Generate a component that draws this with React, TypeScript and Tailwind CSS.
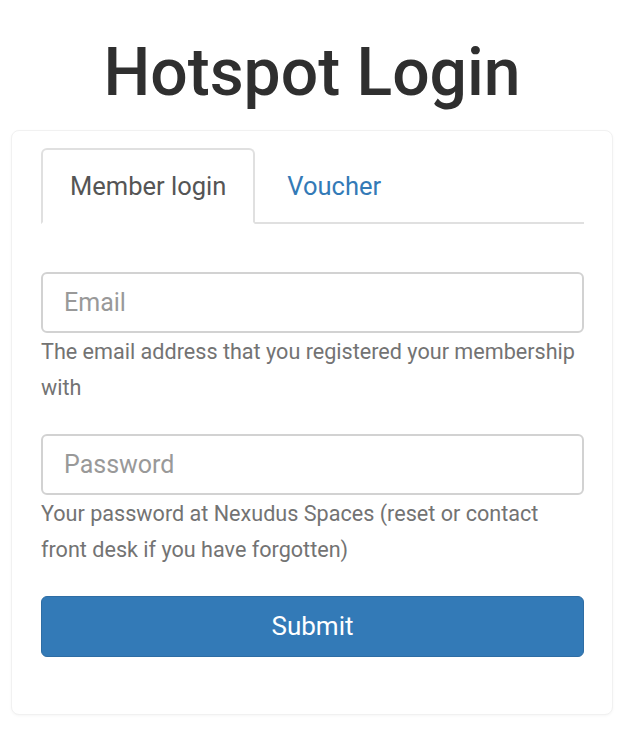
import React, { useState } from "react";

export default function App() {
  const [tab, setTab] = useState<"member" | "voucher">("member");

  return (
    <div
      className="min-h-screen w-full bg-white text-[#333]"
      style={{ fontFamily: "Roboto, 'Liberation Sans', sans-serif" }}
    >
      {/* Title */}
      <div className="pt-[37px] pb-[21px] px-[11px]">
        <h1 className="text-center text-[66px] leading-[72px] font-medium text-[#2f2f2f] pr-[16px]">
          Hotspot Login
        </h1>
      </div>

      {/* Card */}
      <div className="ml-[11px] w-[602px] rounded-lg border border-[#f1f1f1] bg-white pl-[29px] pr-[28px] pt-[17px] pb-[57px] shadow-[0_1px_3px_rgba(0,0,0,0.04)]">
        {/* Tabs */}
        <ul className="flex border-b-2 border-[#e0e0e0]">
          <li className="-mb-[2px]">
            <button
              onClick={() => setTab("member")}
              className={`flex h-[76px] items-center rounded-t-md border-2 px-[27px] text-[25.5px] ${
                tab === "member"
                  ? "border-[#e0e0e0] border-b-white bg-white text-[#555]"
                  : "border-transparent text-[#337ab7]"
              }`}
            >
              Member login
            </button>
          </li>
          <li className="-mb-[2px]">
            <button
              onClick={() => setTab("voucher")}
              className={`flex h-[76px] items-center rounded-t-md border-2 px-[30px] text-[25.5px] ${
                tab === "voucher"
                  ? "border-[#e0e0e0] border-b-white bg-white text-[#555]"
                  : "border-transparent text-[#337ab7]"
              }`}
            >
              Voucher
            </button>
          </li>
        </ul>

        {/* Form */}
        <form className="pt-[48px]" onSubmit={(e) => e.preventDefault()}>
          <input
            type="email"
            placeholder="Email"
            className="block h-[61px] w-full rounded-md border-2 border-[#d2d2d2] px-[21px] text-[25px] text-[#555] placeholder:text-[#999] outline-none"
          />
          <p className="mt-[1px] text-[21.6px] leading-[36px] text-[#737373]">
            The email address that you registered your membership with
          </p>

          <input
            type="password"
            placeholder="Password"
            className="mt-[28px] block h-[61px] w-full rounded-md border-2 border-[#d2d2d2] px-[21px] text-[25px] text-[#555] placeholder:text-[#999] outline-none"
          />
          <p className="mt-[1px] text-[21.6px] leading-[36px] text-[#737373]">
            Your password at Nexudus Spaces (reset or contact front desk if you have forgotten)
          </p>

          <button
            type="submit"
            className="mt-[28px] block h-[61px] w-full rounded-md border border-[#2e6da4] bg-[#337ab7] text-[26px] text-white"
          >
            Submit
          </button>
        </form>
      </div>
    </div>
  );
}
